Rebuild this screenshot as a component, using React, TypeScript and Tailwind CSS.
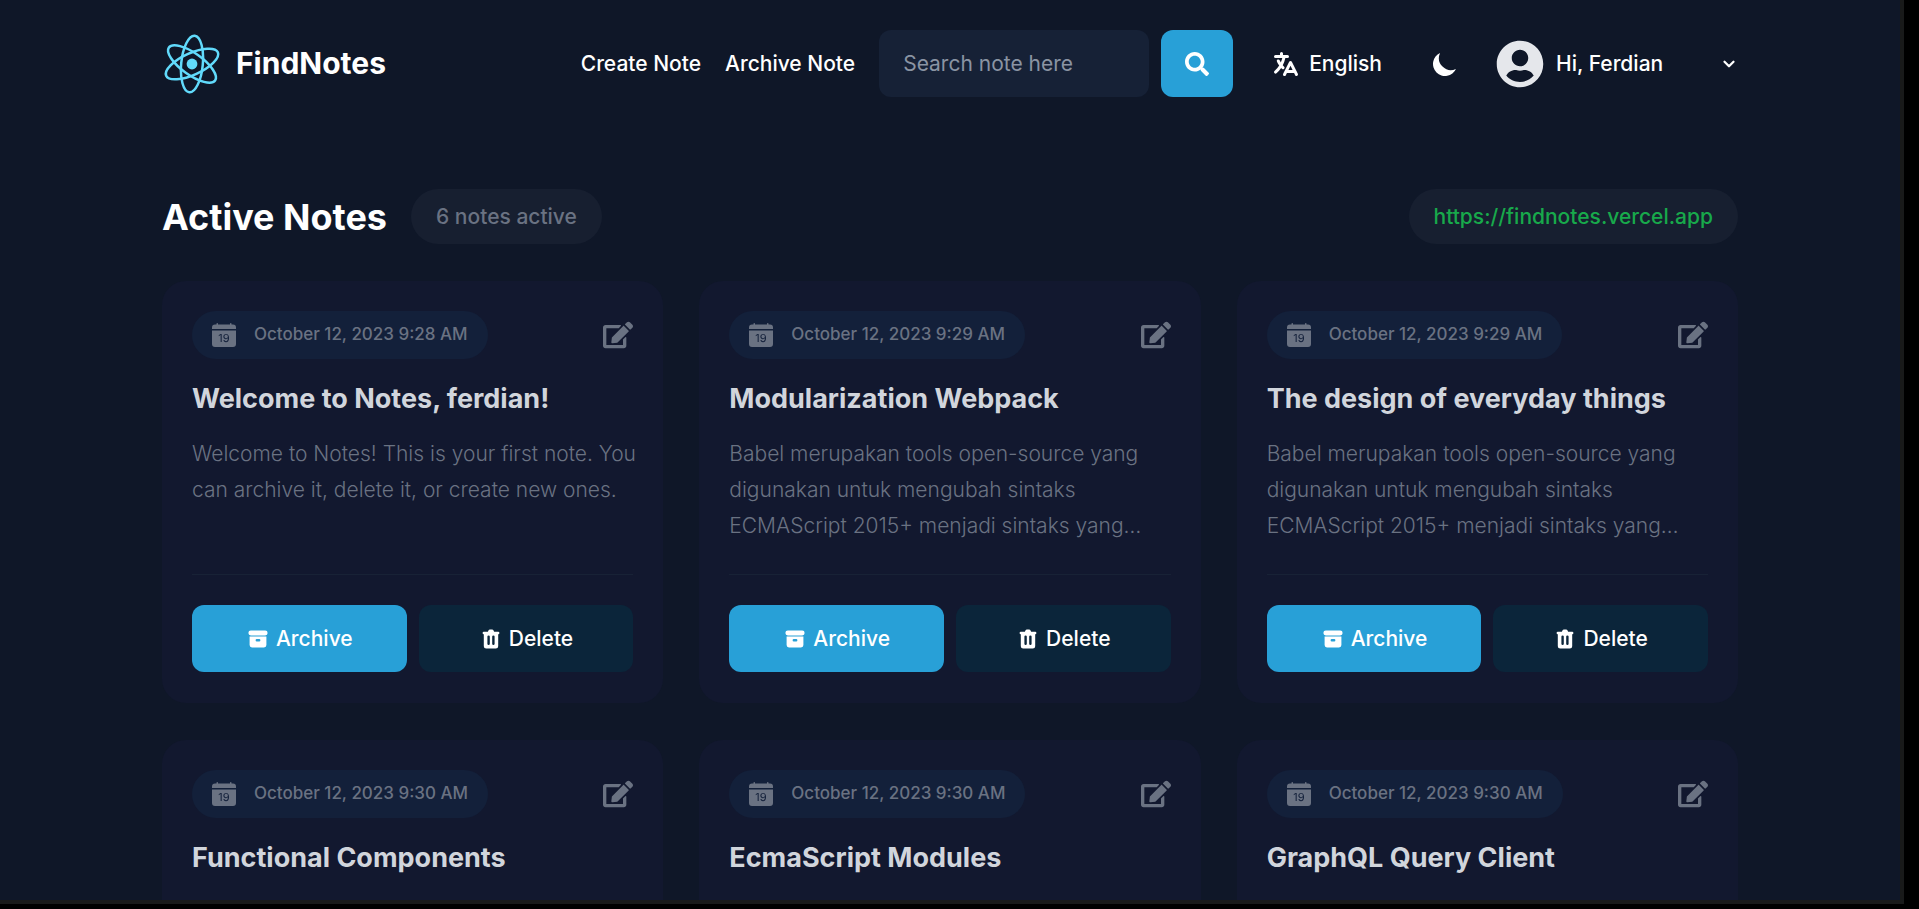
import { useState } from "react";
import { BsCalendarDateFill } from "react-icons/bs";
import { FaEdit, FaSearch, FaUserCircle } from "react-icons/fa";
import { HiArchive, HiMoon, HiTranslate, HiTrash } from "react-icons/hi";
import { FiChevronDown } from "react-icons/fi";

type Note = { title: string; date: string; body?: string };

const babel =
  "Babel merupakan tools open-source yang digunakan untuk mengubah sintaks ECMAScript 2015+ menjadi sintaks yang…";

const notes: Note[] = [
  {
    title: "Welcome to Notes, ferdian!",
    date: "October 12, 2023 9:28 AM",
    body: "Welcome to Notes! This is your first note. You can archive it, delete it, or create new ones.",
  },
  { title: "Modularization Webpack", date: "October 12, 2023 9:29 AM", body: babel },
  { title: "The design of everyday things", date: "October 12, 2023 9:29 AM", body: babel },
  { title: "Functional Components", date: "October 12, 2023 9:30 AM" },
  { title: "EcmaScript Modules", date: "October 12, 2023 9:30 AM" },
  { title: "GraphQL Query Client", date: "October 12, 2023 9:30 AM" },
];

function Logo() {
  return (
    <svg viewBox="0 0 60 60" className="size-[60px] shrink-0" aria-hidden="true">
      <g transform="rotate(5.5 30 30)" fill="none" stroke="#61dafb" strokeWidth="2.5">
        <ellipse cx="30" cy="30" rx="10.8" ry="28.4" />
        <ellipse cx="30" cy="30" rx="10.8" ry="28.4" transform="rotate(60 30 30)" />
        <ellipse cx="30" cy="30" rx="10.8" ry="28.4" transform="rotate(-60 30 30)" />
      </g>
      <circle cx="30" cy="30" r="5.4" fill="#61dafb" />
    </svg>
  );
}

function Header() {
  const [query, setQuery] = useState("");
  return (
    <header className="flex items-center justify-between py-[30px] text-[21px] font-medium">
      <a href="#home" className="flex items-center gap-3.5">
        <Logo />
        <span className="text-[30px] font-bold">FindNotes</span>
      </a>
      <div className="flex items-center">
        <nav className="flex gap-6 pr-6">
          <a href="#create">Create Note</a>
          <a href="#archive">Archive Note</a>
        </nav>
        <form className="flex gap-3" onSubmit={(e) => e.preventDefault()}>
          <input
            type="search"
            aria-label="Search notes"
            placeholder="Search note here"
            value={query}
            onChange={(e) => setQuery(e.target.value)}
            className="h-[67px] w-[270px] rounded-xl bg-[#162136] px-6 font-normal outline-none placeholder:text-[#8a94a3]"
          />
          <button
            type="submit"
            aria-label="Search"
            className="flex h-[67px] w-[72px] items-center justify-center rounded-xl bg-[#28a0d7]"
          >
            <FaSearch className="size-6" />
          </button>
        </form>
        <button type="button" className="ml-[38px] flex items-center gap-2">
          <HiTranslate className="size-[30px]" />
          English
        </button>
        <button type="button" aria-label="Toggle theme" className="ml-12">
          <HiMoon className="size-[30px]" />
        </button>
        <button type="button" className="ml-9 flex w-[242px] items-center gap-3">
          <FaUserCircle className="size-12 text-gray-200" />
          Hi, Ferdian
          <FiChevronDown className="ml-auto size-[18px] stroke-[3px]" />
        </button>
      </div>
    </header>
  );
}

function NoteCard({ note }: { note: Note }) {
  return (
    <article className="min-h-[422px] rounded-3xl bg-[#12182f] p-[30px]">
      <div className="flex items-center justify-between text-gray-500">
        <div className="flex h-12 items-center gap-[18px] rounded-full bg-[#13203a] px-5 text-[17px] font-medium">
          <BsCalendarDateFill className="size-6" />
          <time>{note.date}</time>
        </div>
        <button type="button" aria-label={`Edit ${note.title}`}>
          <FaEdit className="size-[30px]" />
        </button>
      </div>
      <h2 className="mt-[22px] text-[27px] leading-9 font-bold text-gray-300">{note.title}</h2>
      {note.body && (
        <>
          <p className="mt-[19px] -mr-1 line-clamp-3 min-h-[108px] text-[21px] leading-9 font-light text-gray-500">
            {note.body}
          </p>
          <div className="mt-[30px] grid grid-cols-2 gap-3 border-t border-[#182236] pt-[30px] text-[21px] font-medium">
            <button
              type="button"
              className="flex h-[67px] items-center justify-center gap-1.5 rounded-xl bg-[#28a0d7]"
            >
              <HiArchive className="size-6" />
              Archive
            </button>
            <button
              type="button"
              className="flex h-[67px] items-center justify-center gap-1.5 rounded-xl bg-[#0b253a]"
            >
              <HiTrash className="size-6" />
              Delete
            </button>
          </div>
        </>
      )}
    </article>
  );
}

export default function App() {
  return (
    <div className="h-screen bg-black pr-[15px] pb-[5px] font-['Inter',sans-serif] text-white">
      <div className="h-full overflow-hidden border-r-4 border-b-4 border-[#191a1a] bg-[#0f1728]">
        <div className="mx-auto max-w-[1576px]">
          <Header />
          <main className="pt-[62px]">
            <div className="flex items-center justify-between text-[21px] font-medium">
              <div className="flex items-center gap-6">
                <h1 className="text-4xl font-bold">Active Notes</h1>
                <span className="flex h-[55px] items-center rounded-full bg-[#171f30] px-[25px] text-gray-500">
                  6 notes active
                </span>
              </div>
              <a
                href="https://findnotes.vercel.app"
                className="flex h-[55px] items-center rounded-full bg-[#171f30] px-[25px] text-[#18a94b]"
              >
                https://findnotes.vercel.app
              </a>
            </div>
            <div className="mt-[37px] grid grid-cols-3 gap-x-9 gap-y-[37px]">
              {notes.map((note) => (
                <NoteCard key={note.title} note={note} />
              ))}
            </div>
          </main>
        </div>
      </div>
    </div>
  );
}
